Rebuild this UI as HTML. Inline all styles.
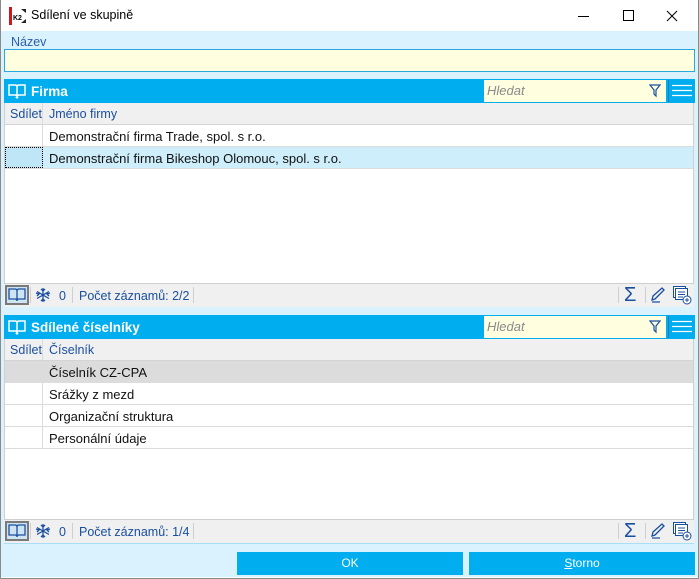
<!DOCTYPE html>
<html><head><meta charset="utf-8"><style>
*{margin:0;padding:0;box-sizing:border-box}
body{width:699px;height:579px;overflow:hidden;font-family:"Liberation Sans",sans-serif;font-size:12px;background:#fff;position:relative}
.a{position:absolute}
.win{left:0;top:0;width:699px;height:579px;border:1px solid #8a8a8a;border-top:none}
.body{left:1px;top:31px;width:697px;height:546px;background:#d9f2fd}
.hdr{background:#00adef;color:#fff;font-weight:bold;font-size:13.5px}
.srch{background:#ffffe0;color:#8a8a8a;font-style:italic;font-size:13px;line-height:22px;padding-left:3px}
.grid{background:#fff;border-left:1px solid #d0d0d0;border-right:1px solid #d0d0d0}
.ch{background:#f0f0f0;color:#1a4fa0;border-bottom:1px solid #d4d4d4;height:22px;line-height:23px;font-size:12.5px}
.row{height:22px;line-height:23px;border-bottom:1px solid #dcdcdc;color:#111;font-size:13px}
.c1{position:absolute;left:0;width:38px;height:100%;border-right:1px solid #dcdcdc;padding-left:5px}
.c2{position:absolute;left:44px;padding-left:0}
.ft{background:#f0f0f0;border-top:1px solid #cfcfcf;height:24px;color:#1a4fa0}
.sep{position:absolute;top:4px;width:1px;height:16px;background:#cfcfcf}
.btn{background:#00adef;color:#fff;text-align:center;line-height:23px;font-size:12px}
.fl{color:#1a4fa0;font-size:12.5px}
</style></head><body>
<div class="a win"></div>
<svg class="a" style="left:9px;top:7px" width="17" height="18" viewBox="0 0 17 18"><rect x="0" y="0" width="3" height="18" fill="#d0151d"/><rect x="3" y="2" width="14" height="14" fill="#fff"/><text x="4" y="13" font-size="7" font-weight="bold" font-family="Liberation Sans" fill="#000">K2</text><path d="M12 2 L17 2 L17 6Z M12 16 L17 16 L17 12Z" fill="#222"/></svg>
<div class="a" style="left:31px;top:8px;font-size:12.5px;color:#000">Sdílení ve skupině</div>
<svg class="a" style="left:578px;top:9px" width="110" height="14"><line x1="0" y1="7.5" x2="11" y2="7.5" stroke="#000"/><rect x="45.5" y="1.5" width="10" height="10" fill="none" stroke="#000"/><path d="M89 2 L99 12 M99 2 L89 12" stroke="#000"/></svg>
<div class="a body"></div>
<div class="a" style="left:11px;top:35px;color:#2a5db0;font-size:12.5px">Název</div>
<div class="a" style="left:4px;top:49px;width:691px;height:23px;background:#ffffe0;border:1px solid #29a8e0"></div>

<div class="a hdr" style="left:4px;top:79px;width:691px;height:24px"></div>
<svg class="a" style="left:8px;top:83px" width="18" height="16" viewBox="0 0 18 16"><path d="M1 2 H7 Q9 2 9 4 V14 Q9 12 7 12 H1Z M17 2 H11 Q9 2 9 4 V14 Q9 12 11 12 H17Z" fill="none" stroke="#fff" stroke-width="1.5"/><path d="M7 14 L9 16 L11 14" fill="#fff"/></svg>
<div class="a hdr" style="left:31px;top:84px;background:none">Firma</div>
<div class="a srch" style="left:484px;top:80px;width:182px;height:22px">Hledat</div>
<svg class="a" style="left:649px;top:84px" width="12" height="14"><path d="M1 1 H11 L7 6 V12 L5 10 V6Z" fill="none" stroke="#1a4fa0" stroke-width="1.2"/></svg>
<div class="a" style="left:668px;top:80px;width:1px;height:22px;background:#0a7fc0"></div>
<svg class="a" style="left:672px;top:84px" width="20" height="14"><path d="M0 1.5H20M0 6.5H20M0 11.5H20" stroke="#fff" stroke-width="1.3"/></svg>
<div class="a grid" style="left:4px;top:103px;width:690px;height:180px">
<div class="ch a" style="left:0;top:0;width:688px"><span class="c1">Sdílet</span><span class="c2">Jméno firmy</span></div>
<div class="row a" style="left:0;top:22px;width:688px"><span class="c1"></span><span class="c2">Demonstrační firma Trade, spol. s r.o.</span></div>
<div class="row a" style="left:0;top:44px;width:688px;background:#cdeefa"><span class="c1" style="border:1px dotted #000;background:#bfe6f7"></span><span class="c2">Demonstrační firma Bikeshop Olomouc, spol. s r.o.</span></div>
</div>
<div class="a ft" style="left:4px;top:283px;width:690px"></div>
<div class="a" style="left:5px;top:285px;width:24px;height:20px;border:2px solid #7a7a7a;background:#cfe4f3"></div>
<svg class="a" style="left:8px;top:288px" width="18" height="14" viewBox="0 0 18 14"><path d="M1 1 H7 Q9 1 9 3 V13 Q9 11 7 11 H1Z M17 1 H11 Q9 1 9 3 V13 Q9 11 11 11 H17Z" fill="none" stroke="#1a4fa0" stroke-width="1.3"/></svg>
<div class="sep" style="left:30px;top:287px"></div>
<svg class="a" style="left:35px;top:287px" width="16" height="16" viewBox="0 0 16 16"><g stroke="#1a4fa0" stroke-width="1.3" fill="none"><path d="M8 1V15M2 4.5L14 11.5M2 11.5L14 4.5M6 2L8 4L10 2M6 14L8 12L10 14M1 6L4 7L2 9M15 6L12 7L14 9"/></g></svg>
<div class="a fl" style="left:59px;top:289px">0</div>
<div class="sep" style="left:72px;top:287px"></div>
<div class="a fl" style="left:79px;top:289px">Počet záznamů: 2/2</div>
<div class="sep" style="left:193px;top:287px"></div>
<div class="sep" style="left:618px;top:287px"></div>
<div class="a" style="left:624px;top:284px;color:#1a4fa0;font-size:20px">Σ</div>
<div class="sep" style="left:645px;top:287px"></div>
<svg class="a" style="left:649px;top:286px" width="18" height="18"><path d="M3 14 L4 10 L13 2 L15 4 L6 13Z M3 16H11" fill="none" stroke="#1a4fa0" stroke-width="1.3"/></svg>
<svg class="a" style="left:672px;top:285px" width="20" height="20"><rect x="1.5" y="1.5" width="12" height="11" fill="#fff" stroke="#1a4fa0"/><rect x="3.5" y="3.5" width="12" height="11" fill="#fff" stroke="#1a4fa0"/><path d="M6 7H13M6 9.5H13M6 12H11" stroke="#1a4fa0"/><circle cx="15" cy="15" r="4" fill="#fff" stroke="#1a4fa0"/><path d="M13 15H17M15 13V17" stroke="#1a4fa0"/></svg>

<div class="a hdr" style="left:4px;top:315px;width:691px;height:24px"></div>
<svg class="a" style="left:8px;top:319px" width="18" height="16" viewBox="0 0 18 16"><path d="M1 2 H7 Q9 2 9 4 V14 Q9 12 7 12 H1Z M17 2 H11 Q9 2 9 4 V14 Q9 12 11 12 H17Z" fill="none" stroke="#fff" stroke-width="1.5"/><path d="M7 14 L9 16 L11 14" fill="#fff"/></svg>
<div class="a hdr" style="left:31px;top:320px;background:none">Sdílené číselníky</div>
<div class="a srch" style="left:484px;top:316px;width:182px;height:22px">Hledat</div>
<svg class="a" style="left:649px;top:320px" width="12" height="14"><path d="M1 1 H11 L7 6 V12 L5 10 V6Z" fill="none" stroke="#1a4fa0" stroke-width="1.2"/></svg>
<div class="a" style="left:668px;top:316px;width:1px;height:22px;background:#0a7fc0"></div>
<svg class="a" style="left:672px;top:320px" width="20" height="14"><path d="M0 1.5H20M0 6.5H20M0 11.5H20" stroke="#fff" stroke-width="1.3"/></svg>
<div class="a grid" style="left:4px;top:339px;width:690px;height:180px">
<div class="ch a" style="left:0;top:0;width:688px"><span class="c1">Sdílet</span><span class="c2">Číselník</span></div>
<div class="row a" style="left:0;top:22px;width:688px;background:#dcdcdc"><span class="c1"></span><span class="c2">Číselník CZ-CPA</span></div>
<div class="row a" style="left:0;top:44px;width:688px"><span class="c1"></span><span class="c2">Srážky z mezd</span></div>
<div class="row a" style="left:0;top:66px;width:688px"><span class="c1"></span><span class="c2">Organizační struktura</span></div>
<div class="row a" style="left:0;top:88px;width:688px"><span class="c1"></span><span class="c2">Personální údaje</span></div>
</div>
<div class="a ft" style="left:4px;top:519px;width:690px"></div>
<div class="a" style="left:5px;top:521px;width:24px;height:20px;border:2px solid #7a7a7a;background:#cfe4f3"></div>
<svg class="a" style="left:8px;top:524px" width="18" height="14" viewBox="0 0 18 14"><path d="M1 1 H7 Q9 1 9 3 V13 Q9 11 7 11 H1Z M17 1 H11 Q9 1 9 3 V13 Q9 11 11 11 H17Z" fill="none" stroke="#1a4fa0" stroke-width="1.3"/></svg>
<div class="sep" style="left:30px;top:523px"></div>
<svg class="a" style="left:35px;top:523px" width="16" height="16" viewBox="0 0 16 16"><g stroke="#1a4fa0" stroke-width="1.3" fill="none"><path d="M8 1V15M2 4.5L14 11.5M2 11.5L14 4.5M6 2L8 4L10 2M6 14L8 12L10 14M1 6L4 7L2 9M15 6L12 7L14 9"/></g></svg>
<div class="a fl" style="left:59px;top:525px">0</div>
<div class="sep" style="left:72px;top:523px"></div>
<div class="a fl" style="left:79px;top:525px">Počet záznamů: 1/4</div>
<div class="sep" style="left:193px;top:523px"></div>
<div class="sep" style="left:618px;top:523px"></div>
<div class="a" style="left:624px;top:520px;color:#1a4fa0;font-size:20px">Σ</div>
<div class="sep" style="left:645px;top:523px"></div>
<svg class="a" style="left:649px;top:522px" width="18" height="18"><path d="M3 14 L4 10 L13 2 L15 4 L6 13Z M3 16H11" fill="none" stroke="#1a4fa0" stroke-width="1.3"/></svg>
<svg class="a" style="left:672px;top:521px" width="20" height="20"><rect x="1.5" y="1.5" width="12" height="11" fill="#fff" stroke="#1a4fa0"/><rect x="3.5" y="3.5" width="12" height="11" fill="#fff" stroke="#1a4fa0"/><path d="M6 7H13M6 9.5H13M6 12H11" stroke="#1a4fa0"/><circle cx="15" cy="15" r="4" fill="#fff" stroke="#1a4fa0"/><path d="M13 15H17M15 13V17" stroke="#1a4fa0"/></svg>
<div class="a" style="left:4px;top:543px;width:690px;height:1px;background:#a8dff7"></div>

<div class="a btn" style="left:237px;top:552px;width:226px;height:23px">OK</div>
<div class="a btn" style="left:469px;top:552px;width:226px;height:23px"><u>S</u>torno</div>
</body></html>
